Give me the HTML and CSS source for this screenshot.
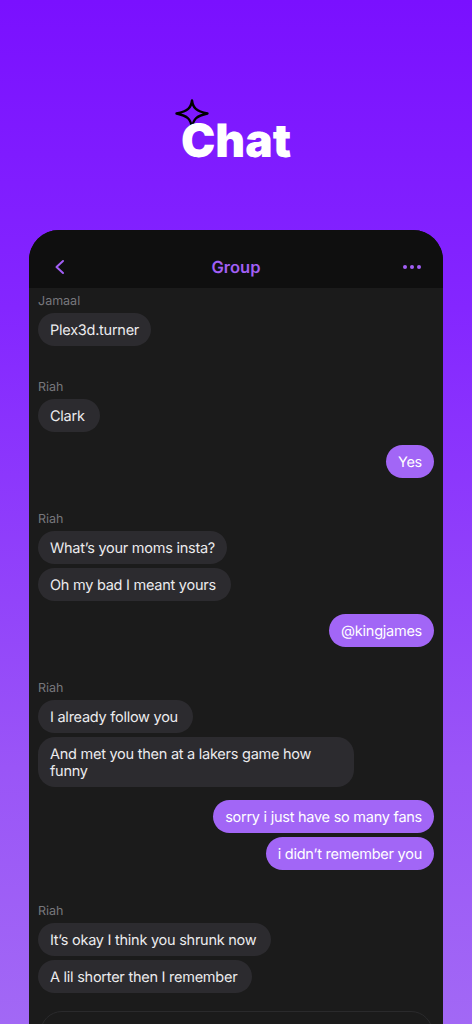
FILE: index.html
```html
<!DOCTYPE html>
<html lang="en">

<head>
    <meta charset="UTF-8">
    <meta name="viewport" content="width=device-width, initial-scale=1.0">
    <title>Chat</title>
    <link rel="stylesheet" href="styles.css">
</head>

<body>
    <header class="hero">
        <h1 class="hero-title">
            <svg class="hero-star" width="34" height="30" viewBox="0 0 34 30" fill="none">
                <path d="M17 1.500C18 9 21 12 32.500 14.500C21 17 18.500 20 17 28.500C15.500 20 13 17 1.500 14.500C13 12 16 9 17 1.500Z" stroke="#000" stroke-width="2.400" stroke-linejoin="round" />
            </svg>
            <span class="hero-text">Chat</span>
        </h1>
    </header>

    <main class="phone">
        <div class="topbar">
            <svg class="back-icon" width="12" height="18" viewBox="0 0 12 18" fill="none">
                <path d="M10 3L3.500 9L10 15" stroke="#a25ff5" stroke-width="2" stroke-linecap="round" stroke-linejoin="round" />
            </svg>
            <span class="topbar-title">Group</span>
            <span class="more-icon"><i></i><i></i><i></i></span>
        </div>

        <div class="messages">
            <section class="group">
                <span class="sender">Jamaal</span>
                <p class="bubble">Plex3d.turner</p>
            </section>

            <section class="group">
                <span class="sender">Riah</span>
                <p class="bubble bubble-loose">Clark</p>
            </section>

            <section class="group group-me">
                <p class="bubble bubble-me">Yes</p>
            </section>

            <section class="group group-far">
                <span class="sender">Riah</span>
                <p class="bubble">What’s your moms insta?</p>
                <p class="bubble bubble-loose">Oh my bad I meant yours</p>
            </section>

            <section class="group group-me">
                <p class="bubble bubble-me">@kingjames</p>
            </section>

            <section class="group group-far">
                <span class="sender">Riah</span>
                <p class="bubble bubble-loose">I already follow you</p>
                <p class="bubble bubble-wide">And met you then at a lakers game how funny</p>
            </section>

            <section class="group group-me">
                <p class="bubble bubble-me">sorry i just have so many fans</p>
                <p class="bubble bubble-me">i didn’t remember you</p>
            </section>

            <section class="group group-far">
                <span class="sender">Riah</span>
                <p class="bubble bubble-loose">It’s okay I think you shrunk now</p>
                <p class="bubble bubble-loose">A lil shorter then I remember</p>
            </section>

            <div class="composer"></div>
        </div>
    </main>
</body>

</html>
```

FILE: styles.css
```css
html,
body {
    height: 1024px;
}

body {
    font-family: 'Inter', 'Liberation Sans', sans-serif;
    background: linear-gradient(to bottom, #7a10ff 0%, #8426ff 30%, #9a55f7 75%, #a268f5 100%);
    color: #fff;
    margin: 0;
    overflow: hidden;
    display: flex;
    flex-direction: column;
    text-rendering: geometricPrecision;
}

.hero {
    height: 230px;
    display: flex;
    justify-content: center;
    padding-top: 114px;
    box-sizing: border-box;
}

.hero-title {
    position: relative;
    margin: 0;
    height: 54px;
    font-size: 46px;
    line-height: 54px;
    font-weight: 900;
}

/* the star sits behind the word */
.hero-text {
    position: relative;
}

.hero-star {
    position: absolute;
    left: -6px;
    top: -15px;
}

.phone {
    margin: 0 29px;
    flex: 1;
    background: #1b1b1b;
    border-radius: 30px 30px 0 0;
    overflow: hidden;
}

.topbar {
    height: 58px;
    box-sizing: border-box;
    padding: 16px 22px 0;
    background: #0f0f0f;
    display: grid;
    grid-template-columns: 1fr auto 1fr;
    align-items: center;
}

.back-icon {
    margin-left: 2px;
}

.topbar-title {
    color: #a25ff5;
    font-size: 16.500px;
    font-weight: 600;
}

.more-icon {
    display: flex;
    justify-content: flex-end;
    gap: 3px;
}

.more-icon i {
    width: 4px;
    height: 4px;
    border-radius: 50%;
    background: #a25ff5;
}

.messages {
    padding: 5px 9px 0;
    display: flex;
    flex-direction: column;
}

.group {
    display: flex;
    flex-direction: column;
    align-items: flex-start;
    gap: 4px;
    margin-bottom: 33px;
}

.group-me {
    align-items: flex-end;
    margin-bottom: 33px;
}

.sender {
    font-size: 12.500px;
    line-height: 14px;
    color: #77777b;
    padding-top: 2px;
}

.bubble {
    margin: 0;
    background: #2c2b2f;
    color: #ececee;
    font-size: 14.500px;
    letter-spacing: -0.250px;
    line-height: 17px;
    padding: 9px 12px 7px;
    border-radius: 17px;
}

.bubble-loose {
    padding-right: 15px;
}

.bubble-wide {
    width: 292px;
}

.bubble-me {
    background: #a266f6;
    color: #fff;
}

/* gap is smaller when my reply follows theirs */
.group:has(+ .group-me) {
    margin-bottom: 13px;
}

.composer {
    height: 60px;
    margin: -15px 1px 0 2px;
    border: 1px solid #2a2a2c;
    border-radius: 22px;
}
```
